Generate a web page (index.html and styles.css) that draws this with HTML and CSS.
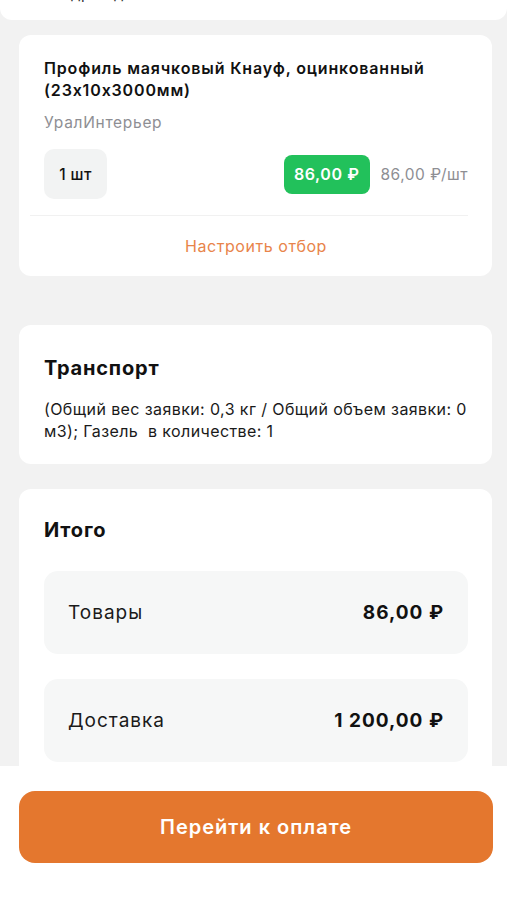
FILE: index.html
```html
<!DOCTYPE html>
<html lang="ru">
<head>
<meta charset="utf-8">
<link rel="stylesheet" href="styles.css">
</head>
<body>
<div class="top">
  <div class="top-text">Адрес доставки</div>
</div>
<main class="content">
  <section class="card product">
    <h2 class="product-title">Профиль маячковый Кнауф, оцинкованный (23х10х3000мм)</h2>
    <div class="vendor">УралИнтерьер</div>
    <div class="price-row">
      <div class="qty">1 шт</div>
      <div class="prices">
        <span class="badge">86,00 ₽</span>
        <span class="unit">86,00 ₽/шт</span>
      </div>
    </div>
    <div class="divider"></div>
    <div class="link">Настроить отбор</div>
  </section>

  <section class="card transport">
    <h3 class="section-title">Транспорт</h3>
    <p class="transport-text">(Общий вес заявки: 0,3 кг / Общий объем заявки: 0 м3); Газель&nbsp; в количестве: 1</p>
  </section>

  <section class="card total">
    <h3 class="section-title">Итого</h3>
    <div class="sum-row"><span class="sum-label">Товары</span><span class="sum-value">86,00 ₽</span></div>
    <div class="sum-row"><span class="sum-label">Доставка</span><span class="sum-value">1 200,00 ₽</span></div>
  </section>
</main>
<footer class="footer">
  <button class="pay">Перейти к оплате</button>
</footer>
</body>
</html>
```

FILE: styles.css
```css
* { box-sizing: border-box; }
html, body { margin: 0; padding: 0; }
body {
  background: #f2f2f2;
  font-family: Inter, "Noto Sans", sans-serif;
  color: #111;
  width: 507px;
  height: 900px;
  overflow: hidden;
}
.top {
  height: 20px;
  background: #fff;
  border-radius: 0 0 12px 12px;
  overflow: hidden;
  position: relative;
}
.top-text {
  font-size: 15px;
  line-height: 20px;
  margin-top: -16px;
  padding-left: 60px;
  color: #333;
  letter-spacing: 0.6px;
}
.content {
  padding: 15px 15px 0 19px;
  display: flex;
  flex-direction: column;
}
.card {
  background: #fff;
  border-radius: 12px;
  padding: 0 24px 0 25px;
}
.product { padding-top: 22px; padding-bottom: 20px; }
.product-title {
  margin: 0;
  font-size: 16px;
  line-height: 22px;
  font-weight: 600;
  letter-spacing: 0.85px;
  color: #111;
}
.vendor {
  margin-top: 12px;
  font-size: 15.5px;
  line-height: 20px;
  letter-spacing: 0.7px;
  color: #8e8e93;
}
.price-row {
  margin-top: 16px;
  display: flex;
  align-items: center;
  justify-content: space-between;
}
.qty {
  width: 63px;
  height: 50px;
  border-radius: 10px;
  background: #f2f3f3;
  display: flex;
  align-items: center;
  justify-content: center;
  font-size: 15.5px;
  font-weight: 500;
  letter-spacing: 0.4px;
  color: #111;
}
.prices { display: flex; align-items: center; gap: 11px; }
.badge {
  background: #22c15b;
  color: #fff;
  font-weight: 600;
  font-size: 16px;
  letter-spacing: 0.6px;
  height: 39px;
  padding: 0 10px;
  border-radius: 8px;
  display: flex;
  align-items: center;
}
.unit { font-size: 15.5px; letter-spacing: 0.5px; color: #8e8e93; }
.divider {
  margin: 16px 0 0 -14px;
  height: 1px;
  background: #f1f1f1;
}
.link {
  margin-top: 20px;
  text-align: center;
  font-size: 16px;
  line-height: 20px;
  letter-spacing: 0.55px;
  color: #e8844a;
}
.transport {
  margin-top: 49px;
  padding-top: 31px;
  padding-bottom: 22px;
}
.section-title {
  margin: 0;
  font-size: 20px;
  line-height: 24px;
  font-weight: 700;
  letter-spacing: 0.8px;
  color: #111;
}
.transport-text {
  margin: 18px 0 0;
  font-size: 16px;
  line-height: 22px;
  letter-spacing: 0.4px;
  color: #1a1a1a;
}
.total {
  margin-top: 25px;
  padding-top: 29px;
  padding-bottom: 120px;
  display: flex;
  flex-direction: column;
  gap: 25px;
}
.total .section-title { margin-bottom: 4px; }
.sum-row {
  height: 83px;
  border-radius: 14px;
  background: #f6f7f7;
  display: flex;
  align-items: center;
  justify-content: space-between;
  padding: 0 24px;
}
.sum-label { font-size: 19px; letter-spacing: 1px; color: #1a1a1a; }
.sum-value { font-size: 19px; font-weight: 700; letter-spacing: 1px; color: #111; }
.footer {
  position: fixed;
  left: 0;
  right: 0;
  bottom: 0;
  height: 134px;
  background: #fff;
  padding: 25px 14px 0 19px;
}
.pay {
  width: 100%;
  height: 72px;
  border: 0;
  border-radius: 16px;
  background: #e4772e;
  color: #fff;
  font-family: Inter, "Noto Sans", sans-serif;
  font-size: 20px;
  font-weight: 600;
  letter-spacing: 1px;
}
```
